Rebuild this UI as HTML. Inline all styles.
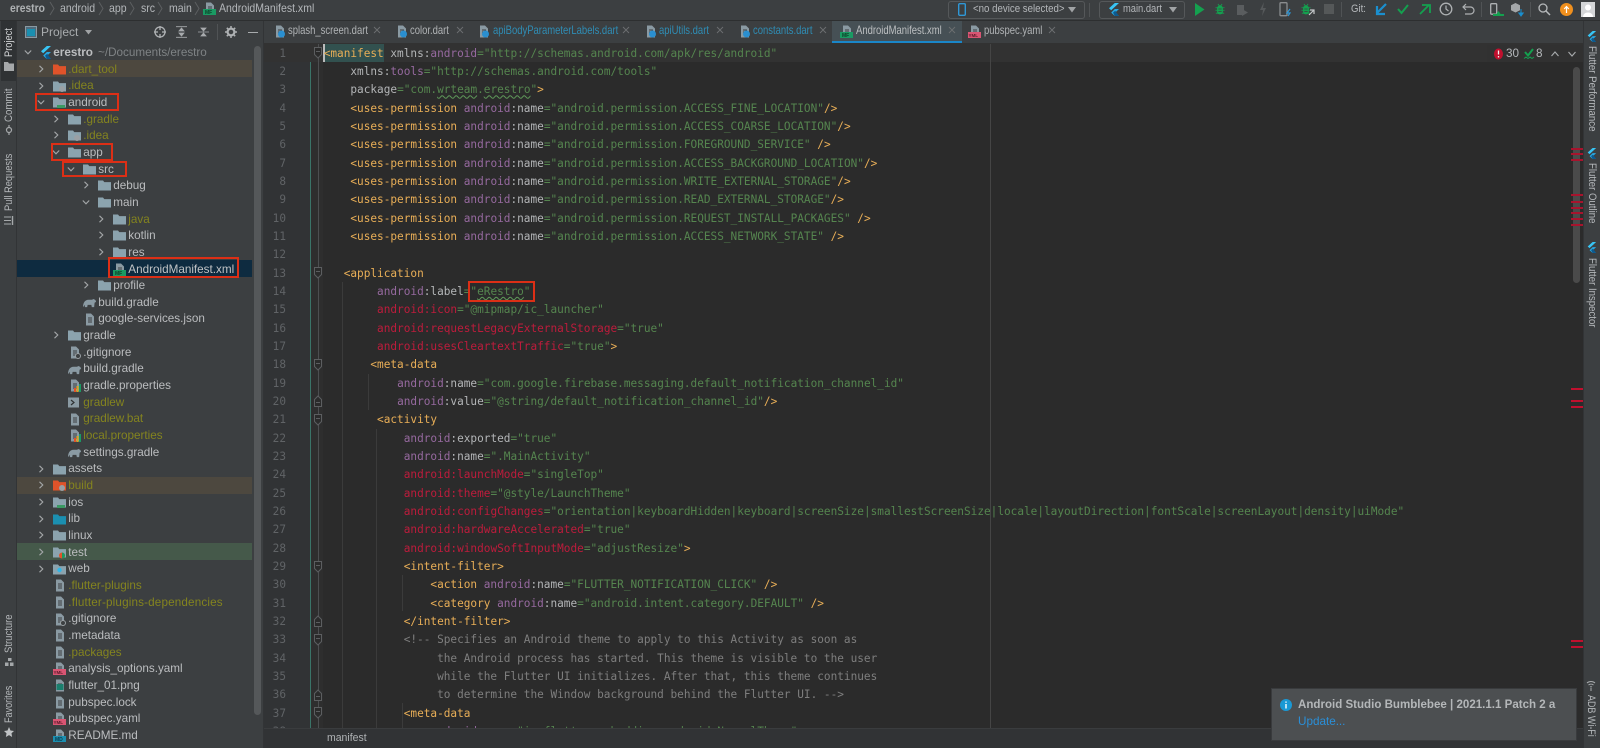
<!DOCTYPE html>
<html><head><meta charset="utf-8"><title>AndroidManifest.xml</title>
<style>
html,body{margin:0;padding:0;width:1600px;height:748px;overflow:hidden;background:#3c3f41}
#root{position:relative;width:1600px;height:748px;overflow:hidden;background:#3c3f41;font-family:"Liberation Sans",sans-serif;filter:blur(.3px)}
.p{position:absolute}
.ui{position:absolute;white-space:nowrap;color:#b4b7ba;font-size:11.7px;line-height:16px}
.sq{transform-origin:0 50%}
svg{position:absolute;overflow:visible}
svg text{font-family:"Liberation Sans",sans-serif;font-weight:bold}
#tree{position:absolute;left:17px;top:44.2px;width:235px;color:#bbbdbf;font-size:11.7px}
.r{position:relative;height:16.667px;line-height:16.667px;white-space:nowrap}
.r span{position:absolute;top:.8px}
.r svg{top:2px;width:13px;height:13px}
.r svg.ch{top:4px;width:8px;height:8px}
.o{color:#84841f}
#code{position:absolute;left:323.7px;top:44.7px;width:1245px;height:683.3px;overflow:hidden;font-family:"DejaVu Sans Mono","Liberation Mono",monospace;font-size:11.08px;line-height:18.333px;white-space:pre;color:#b3b5b7}
#nums{position:absolute;left:264px;top:44.7px;width:22px;height:683.3px;overflow:hidden;font-family:"DejaVu Sans Mono","Liberation Mono",monospace;font-size:11.08px;line-height:18.333px;text-align:right;color:#606366}
.t{color:#e8ae57}.a{color:#96699f}.s{color:#55854f}.e{color:#bd1c3c}.c{color:#7e7e7e}
.w{text-decoration:underline wavy #5f9a5a .6px;text-underline-offset:1px}
.box{position:absolute;border:2px solid #dc2f16;box-sizing:border-box}
.vl{position:absolute;white-space:nowrap;color:#b4b7ba;font-size:11.2px;line-height:14px;transform-origin:0 0}
.tab{position:absolute;top:23px;font-size:11.7px;line-height:16px;white-space:nowrap;color:#b0b3b5;transform:scaleX(.81);transform-origin:0 50%}
.bl{color:#2f8db5}
.x{position:absolute;top:25.5px;width:8px;height:8px}
.mk{position:absolute;left:1571px;width:12px;height:2px;background:#a8132d}
.g{position:absolute;width:1px;background:#3b3b3b}
</style></head><body>
<div id="root">
<svg width="0" height="0" style="position:absolute">
<defs>
<symbol id="folder" viewBox="0 0 13 13"><path d="M0 1.5h5l1.3 1.6H13v8.4H0z" fill="currentColor"/></symbol>
<symbol id="file" viewBox="0 0 13 13"><path d="M3 .5h5l3 3v9H3z" fill="#8a9aa3"/><path d="M5 5h4M5 7h4M5 9h4" stroke="#3c3f41" stroke-width=".9"/></symbol>
<symbol id="cr" viewBox="0 0 8 8"><path d="M2.5 .8 5.8 4 2.5 7.2" fill="none" stroke="#a4a7a9" stroke-width="1.1"/></symbol>
<symbol id="cd" viewBox="0 0 8 8"><path d="M.8 2.5 4 5.8 7.2 2.5" fill="none" stroke="#a4a7a9" stroke-width="1.1"/></symbol>
<symbol id="fl" viewBox="0 0 13 13"><path d="M7.8 0H12L4.2 7.3 2 5.3z" fill="#38c5f5"/><path d="M7.8 6H12L8.2 9.6 12 13H7.8L4.2 9.6z" fill="#29a9e3"/><path d="M6 9.6 8.2 7.8 12 13H7.8z" fill="#0d5a8f"/></symbol>
<symbol id="cl" viewBox="0 0 8 8"><path d="M1 1l6 6M7 1 1 7" stroke="#6c6f71" stroke-width=".9"/></symbol>
<symbol id="fo" viewBox="0 0 10 14"><path d="M1.500 1.500h7v7L5 12 1.500 8.500z" fill="#2b2b2b" stroke="#5c5e60"/><path d="M3 5.500h4" stroke="#5c5e60"/></symbol>
<symbol id="fc" viewBox="0 0 10 14"><path d="M1.500 12.500h7v-7L5 2 1.500 5.500z" fill="#2b2b2b" stroke="#5c5e60"/><path d="M3 8.500h4" stroke="#5c5e60"/></symbol>
<symbol id="ele" viewBox="0 0 14 11"><path d="M0 10.500C0 6 2 2.500 6 2.500c2 0 3.500.3 5-.7 1.500 0 3 1.200 3 3l-1.500 1-.5 4.700h-2.500L9 8H5l-.5 2.500H2L2 8z" fill="#8a9aa3"/></symbol>
<symbol id="bug" viewBox="0 0 12 14"><path d="M3.500 1l1.500 2h2L8.500 1" stroke="currentColor" fill="none"/><rect x="2.500" y="3" width="7" height="10.500" rx="3" fill="currentColor"/><path d="M.5 5.500h11M.5 8.500h11M1 12h10" stroke="currentColor"/><path d="M4 7h4M4 10h4" stroke="#3c3f41" stroke-width=".8"/></symbol>
</defs>
</svg>

<!-- top bar -->
<div class="p" style="left:0;top:20px;width:1600px;height:1px;background:#2d2f30"></div>
<div class="ui" style="left:10px;top:0;font-weight:bold;color:#aeb1b3;height:17px;line-height:17px;transform:scaleX(.88);transform-origin:0 50%">erestro</div>
<div class="ui" style="left:60px;top:0;line-height:17px;transform:scaleX(.9);transform-origin:0 50%">android</div>
<div class="ui" style="left:109px;top:0;line-height:17px;transform:scaleX(.9);transform-origin:0 50%">app</div>
<div class="ui" style="left:141px;top:0;line-height:17px;transform:scaleX(.9);transform-origin:0 50%">src</div>
<div class="ui" style="left:169px;top:0;line-height:17px;transform:scaleX(.9);transform-origin:0 50%">main</div>
<div class="ui" style="left:219px;top:0;line-height:17px;transform:scaleX(.9);transform-origin:0 50%">AndroidManifest.xml</div>
<svg style="left:0;top:0" width="210" height="20"><path d="M50 2l4 6.500-4 6.500M99 2l4 6.500-4 6.500M130 2l4 6.500-4 6.500M158 2l4 6.500-4 6.500M195 2l4 6.500-4 6.500" stroke="#5c5f61" fill="none"/></svg>
<svg style="left:203px;top:2px" width="13" height="13"><use href="#file" width="13" height="13"/><rect y="7" width="13" height="6" fill="#1a9a63"/><text x="2" y="12" font-size="5" fill="#0f3d28">MF</text></svg>

<div class="p" style="left:948px;top:1px;width:135px;height:16px;border:1px solid #55585a;border-radius:3px"></div>
<svg style="left:958px;top:3px" width="8" height="13"><rect x=".7" y=".7" width="6.600" height="11.600" rx="1" fill="none" stroke="#2f97d6" stroke-width="1.400"/></svg>
<div class="ui" style="left:973px;top:1px;font-size:11.4px;transform:scaleX(.85);transform-origin:0 50%">&lt;no device selected&gt;</div>
<svg style="left:1068px;top:7px" width="8" height="6"><path d="M0 0h8L4 5.500z" fill="#a0a3a5"/></svg>
<div class="p" style="left:1089px;top:3px;width:1px;height:14px;background:#505355"></div>
<div class="p" style="left:1099px;top:1px;width:84px;height:16px;border:1px solid #55585a;border-radius:3px"></div>
<svg style="left:1107px;top:3px" width="13" height="13"><use href="#fl" width="13" height="13"/></svg>
<div class="ui" style="left:1123px;top:1px;font-size:11.4px;transform:scaleX(.82);transform-origin:0 50%">main.dart</div>
<svg style="left:1169px;top:7px" width="8" height="6"><path d="M0 0h8L4 5.500z" fill="#a0a3a5"/></svg>
<svg style="left:1195px;top:3px" width="10" height="13"><path d="M0 0l9.500 6.500L0 13z" fill="#14a04f"/></svg>
<svg style="left:1215px;top:3px;color:#14a04f" width="10" height="12"><use href="#bug" width="10" height="12"/></svg>
<svg style="left:1236px;top:3px" width="13" height="13"><path d="M1 2h7v10H1z" fill="#5a5d5f"/><path d="M6 6l6 3.500-6 3.500z" fill="#5a5d5f"/></svg>
<svg style="left:1259px;top:2px" width="8" height="14"><path d="M5 0 1 8h3l-1 6 4-8H4z" fill="#55585a"/></svg>
<svg style="left:1279px;top:2px" width="13" height="15"><rect x="1" y=".7" width="7" height="13" rx="1" fill="none" stroke="#8a8d8f" stroke-width="1.300"/><path d="M11 7 8 11h3l-2 3" stroke="#2f97d6" fill="none" stroke-width="1.200"/></svg>
<svg style="left:1301px;top:3px;color:#14a04f" width="10" height="12"><use href="#bug" width="10" height="12"/></svg>
<svg style="left:1308px;top:9px" width="7" height="7"><path d="M6 1 1 6M2 1h4v4" stroke="#c4c7c9" fill="none" stroke-width="1.200"/></svg>
<div class="p" style="left:1324px;top:4px;width:10px;height:10px;background:#555859"></div>
<div class="p" style="left:1341px;top:2px;width:1px;height:15px;background:#505355"></div>
<div class="ui" style="left:1351px;top:1px;font-size:11.4px;transform:scaleX(.84);transform-origin:0 50%">Git:</div>
<svg style="left:1375px;top:3px" width="12" height="12"><path d="M11 1 2 10M2 3v8h8" stroke="#1a8fcf" fill="none" stroke-width="2.200"/></svg>
<svg style="left:1397px;top:3px" width="12" height="12"><path d="M1 6l3.500 4L11 2" stroke="#14a04f" fill="none" stroke-width="2"/></svg>
<svg style="left:1419px;top:3px" width="12" height="12"><path d="M1 11l9-9M3 2h8v8" stroke="#14a04f" fill="none" stroke-width="1.800"/></svg>
<svg style="left:1439px;top:2px" width="14" height="14"><circle cx="7" cy="7" r="5.800" fill="none" stroke="#aeb1b3" stroke-width="1.300"/><path d="M7 3.500V7l2.500 2" stroke="#aeb1b3" fill="none" stroke-width="1.200"/></svg>
<svg style="left:1462px;top:3px" width="13" height="12"><path d="M4 1 1 4l3 3M1 4h7.500a3.500 3.500 0 0 1 0 7H3" stroke="#aeb1b3" fill="none" stroke-width="1.200"/></svg>
<div class="p" style="left:1481px;top:2px;width:1px;height:15px;background:#505355"></div>
<svg style="left:1490px;top:3px" width="14" height="13"><rect x=".7" y=".7" width="6" height="10.500" rx="1" fill="none" stroke="#aeb1b3" stroke-width="1.300"/><path d="M5 13l3.500-5 3.500 5z" fill="#14a04f"/><rect x="3" y="11" width="11" height="2" fill="#14a04f"/></svg>
<svg style="left:1511px;top:3px" width="13" height="14"><path d="M4.500 0 9 2.200v5L4.500 9.500 0 7.200v-5z" fill="#a4a7a9"/><path d="M10 6v6M7.800 10 10 13l2.200-3z" stroke="#1a8fcf" fill="#1a8fcf"/></svg>
<div class="p" style="left:1530px;top:2px;width:1px;height:15px;background:#505355"></div>
<svg style="left:1538px;top:3px" width="13" height="13"><circle cx="5" cy="5" r="4" fill="none" stroke="#b6b9bb" stroke-width="1.300"/><path d="M8 8l4 4" stroke="#b6b9bb" stroke-width="1.500"/></svg>
<svg style="left:1559.500px;top:2.500px" width="13" height="13"><circle cx="6.500" cy="6.500" r="6.500" fill="#f0901e"/><path d="M6.500 10V4M4.200 6 6.500 3.500 8.800 6" stroke="#fff" fill="none" stroke-width="1.200"/></svg>
<svg style="left:1581px;top:2px" width="14" height="15"><rect width="14" height="15" fill="#d4d6d8"/><circle cx="7" cy="5.500" r="3" fill="#fff"/><path d="M2 15c0-6 10-6 10 0z" fill="#fff"/></svg>

<!-- left rail -->
<div class="p" style="left:0;top:21px;width:17px;height:727px;background:#3c3f41;border-right:1px solid #323436;box-sizing:border-box"></div>
<div class="p" style="left:1px;top:21px;width:15px;height:60px;background:#2f3234"></div>
<div class="vl" style="left:1.500px;top:57px;transform:rotate(-90deg) scaleX(.83);color:#d0d2d4">Project</div>
<svg style="left:4px;top:61px" width="10" height="10"><path d="M0 1h4l1 1.500h5V10H0z" fill="#a5a8aa"/></svg>
<div class="vl" style="left:1.500px;top:122px;transform:rotate(-90deg) scaleX(.87)">Commit</div>
<svg style="left:4px;top:125px" width="10" height="10"><circle cx="5" cy="5" r="2.500" fill="none" stroke="#a5a8aa" stroke-width="1.200"/><path d="M5 0v2.500M5 7.500V10" stroke="#a5a8aa" stroke-width="1.200"/></svg>
<div class="vl" style="left:1.500px;top:211px;transform:rotate(-90deg) scaleX(.83)">Pull Requests</div>
<svg style="left:4px;top:216px" width="10" height="9"><path d="M0 1h7M0 4.500h7M0 8h7" stroke="#a5a8aa"/><path d="M8.500 0v9" stroke="#a5a8aa" stroke-width="1.400"/></svg>
<div class="vl" style="left:1.500px;top:653px;transform:rotate(-90deg) scaleX(.85)">Structure</div>
<svg style="left:5px;top:658px" width="9" height="8"><rect x="3" y="0" width="3.500" height="3" fill="#a5a8aa"/><rect y="4.500" width="3.500" height="3.500" fill="#a5a8aa"/><rect x="5" y="4.500" width="3.500" height="3.500" fill="#a5a8aa"/></svg>
<div class="vl" style="left:1.500px;top:723px;transform:rotate(-90deg) scaleX(.81)">Favorites</div>
<svg style="left:4px;top:727px" width="10" height="10"><path d="M5 0l1.500 3.500L10 4 7.500 6.300 8.100 10 5 8.100 1.900 10l.6-3.700L0 4l3.500-.5z" fill="#c0c3c5"/></svg>

<!-- project header -->
<svg style="left:25px;top:26px" width="12" height="12"><rect x=".5" y=".5" width="11" height="11" fill="#4f6b7c" stroke="#8a9aa3"/><rect x="2" y="3" width="8" height="7" fill="#1a8fb0"/></svg>
<div class="ui" style="left:41px;top:24px;font-size:12px;color:#a9acae">Project</div>
<svg style="left:85px;top:30px" width="7" height="5"><path d="M0 0h7L3.500 4.500z" fill="#a0a3a5"/></svg>
<svg style="left:154px;top:26px" width="12" height="12"><circle cx="6" cy="6" r="5" fill="none" stroke="#b0b3b5" stroke-width="1.300"/><path d="M6 0v4M6 8v4M0 6h4M8 6h4" stroke="#b0b3b5" stroke-width="1.300"/></svg>
<svg style="left:176px;top:26px" width="11" height="12"><path d="M0 .7h11M0 11.300h11M5.500 2 8 5H3zM5.500 10 8 7H3z" stroke="#a8abad" fill="#a8abad" stroke-width=".8"/></svg>
<svg style="left:198px;top:26px" width="11" height="12"><path d="M0 6h11M5.500 5 8 2H3zM5.500 7 8 10H3z" stroke="#a8abad" fill="#a8abad" stroke-width=".8"/></svg>
<div class="p" style="left:217px;top:24px;width:1px;height:16px;background:#505355"></div>
<svg style="left:225px;top:26px" width="12" height="12"><circle cx="6" cy="6" r="3.400" fill="none" stroke="#aeb1b3" stroke-width="2.200"/><path d="M6 0v2M6 10v2M0 6h2M10 6h2M1.800 1.800l1.400 1.400M8.800 8.800l1.400 1.400M10.200 1.800 8.800 3.200M3.200 8.800l-1.400 1.400" stroke="#aeb1b3" stroke-width="1.500"/></svg>
<div class="p" style="left:248px;top:31.500px;width:10px;height:1.300px;background:#a8abad"></div>

<!-- tree highlights -->
<div class="p" style="left:17px;top:60.300px;width:235px;height:17px;background:#4d483f"></div>
<div class="p" style="left:17px;top:260.300px;width:235px;height:17px;background:#0e2b40"></div>
<div class="p" style="left:17px;top:477px;width:235px;height:17px;background:#4d483f"></div>
<div class="p" style="left:17px;top:543.400px;width:235px;height:17px;background:#45594a"></div>
<div class="p" style="left:254px;top:46px;width:7px;height:669px;border-radius:4px;background:#55585a"></div>

<!-- tree -->
<div id="tree">
<div class="r"><svg class="ch" style="left:7px"><use href="#cd" width="8" height="8"/></svg><svg style="left:22px"><use href="#fl" width="13" height="13"/></svg><span style="left:36.300px;font-weight:bold">erestro</span><span style="left:81px;color:#7f8385">~/Documents/erestro</span></div>
<div class="r"><svg class="ch" style="left:20px"><use href="#cr" width="8" height="8"/></svg><svg style="left:36px;color:#e0532a"><use href="#folder" width="13" height="13"/></svg><span class="o" style="left:51.300px">.dart_tool</span></div>
<div class="r"><svg class="ch" style="left:20px"><use href="#cr" width="8" height="8"/></svg><svg style="left:36px;color:#8ba3ae"><use href="#folder" width="13" height="13"/><circle cx="9" cy="9" r="3" fill="#9aa0a4"/></svg><span class="o" style="left:51.300px">.idea</span></div>
<div class="r"><svg class="ch" style="left:20px"><use href="#cd" width="8" height="8"/></svg><svg style="left:36px;color:#8ba3ae"><use href="#folder" width="13" height="13"/><rect x="4" y="9" width="8" height="3" fill="#3a9a63"/></svg><span style="left:51.300px">android</span></div>
<div class="r"><svg class="ch" style="left:35px"><use href="#cr" width="8" height="8"/></svg><svg style="left:51px;color:#8ba3ae"><use href="#folder" width="13" height="13"/></svg><span class="o" style="left:66.300px">.gradle</span></div>
<div class="r"><svg class="ch" style="left:35px"><use href="#cr" width="8" height="8"/></svg><svg style="left:51px;color:#8ba3ae"><use href="#folder" width="13" height="13"/><circle cx="9" cy="9" r="3" fill="#9aa0a4"/></svg><span class="o" style="left:66.300px">.idea</span></div>
<div class="r"><svg class="ch" style="left:35px"><use href="#cd" width="8" height="8"/></svg><svg style="left:51px;color:#8ba3ae"><use href="#folder" width="13" height="13"/></svg><span style="left:66.300px">app</span></div>
<div class="r"><svg class="ch" style="left:50px"><use href="#cd" width="8" height="8"/></svg><svg style="left:66px;color:#8ba3ae"><use href="#folder" width="13" height="13"/></svg><span style="left:81.300px">src</span></div>
<div class="r"><svg class="ch" style="left:65px"><use href="#cr" width="8" height="8"/></svg><svg style="left:81px;color:#8ba3ae"><use href="#folder" width="13" height="13"/></svg><span style="left:96.300px">debug</span></div>
<div class="r"><svg class="ch" style="left:65px"><use href="#cd" width="8" height="8"/></svg><svg style="left:81px;color:#8ba3ae"><use href="#folder" width="13" height="13"/></svg><span style="left:96.300px">main</span></div>
<div class="r"><svg class="ch" style="left:80px"><use href="#cr" width="8" height="8"/></svg><svg style="left:96px;color:#8ba3ae"><use href="#folder" width="13" height="13"/></svg><span class="o" style="left:111.300px">java</span></div>
<div class="r"><svg class="ch" style="left:80px"><use href="#cr" width="8" height="8"/></svg><svg style="left:96px;color:#8ba3ae"><use href="#folder" width="13" height="13"/></svg><span style="left:111.300px">kotlin</span></div>
<div class="r"><svg class="ch" style="left:80px"><use href="#cr" width="8" height="8"/></svg><svg style="left:96px;color:#8ba3ae"><use href="#folder" width="13" height="13"/></svg><span style="left:111.300px">res</span></div>
<div class="r"><svg style="left:96px"><use href="#file" width="13" height="13"/><rect y="7" width="13" height="6" fill="#1a9a63"/><text x="2" y="12" font-size="5" fill="#0f3d28">MF</text></svg><span style="left:111.300px;color:#c0c3c5">AndroidManifest.xml</span></div>
<div class="r"><svg class="ch" style="left:65px"><use href="#cr" width="8" height="8"/></svg><svg style="left:81px;color:#8ba3ae"><use href="#folder" width="13" height="13"/></svg><span style="left:96.300px">profile</span></div>
<div class="r"><svg style="left:66px"><use href="#ele" width="13" height="13"/></svg><span style="left:81.300px">build.gradle</span></div>
<div class="r"><svg style="left:66px"><use href="#file" width="13" height="13"/></svg><span style="left:81.300px">google-services.json</span></div>
<div class="r"><svg class="ch" style="left:35px"><use href="#cr" width="8" height="8"/></svg><svg style="left:51px;color:#8ba3ae"><use href="#folder" width="13" height="13"/></svg><span style="left:66.300px">gradle</span></div>
<div class="r"><svg style="left:51px"><use href="#file" width="13" height="13"/><circle cx="10" cy="10" r="2.500" fill="#3c3f41" stroke="#9aa0a4"/></svg><span style="left:66.300px">.gitignore</span></div>
<div class="r"><svg style="left:51px"><use href="#ele" width="13" height="13"/></svg><span style="left:66.300px">build.gradle</span></div>
<div class="r"><svg style="left:51px"><use href="#file" width="13" height="13"/><path d="M6 13V9h2v4z" fill="#e0532a"/><path d="M8.500 13V7h2v6z" fill="#d9a520"/><path d="M11 13V5h2v8z" fill="#1a9a63"/></svg><span style="left:66.300px">gradle.properties</span></div>
<div class="r"><svg style="left:51px"><rect y="1.500" width="11" height="10" fill="#8a9aa3"/><path d="M3 4l3 2.500L3 9" stroke="#2f3234" fill="none" stroke-width="1.200"/></svg><span class="o" style="left:66.300px">gradlew</span></div>
<div class="r"><svg style="left:51px"><use href="#file" width="13" height="13"/></svg><span class="o" style="left:66.300px">gradlew.bat</span></div>
<div class="r"><svg style="left:51px"><use href="#file" width="13" height="13"/><path d="M6 13V9h2v4z" fill="#e0532a"/><path d="M8.500 13V7h2v6z" fill="#d9a520"/><path d="M11 13V5h2v8z" fill="#1a9a63"/></svg><span class="o" style="left:66.300px">local.properties</span></div>
<div class="r"><svg style="left:51px"><use href="#ele" width="13" height="13"/></svg><span style="left:66.300px">settings.gradle</span></div>
<div class="r"><svg class="ch" style="left:20px"><use href="#cr" width="8" height="8"/></svg><svg style="left:36px;color:#8ba3ae"><use href="#folder" width="13" height="13"/></svg><span style="left:51.300px">assets</span></div>
<div class="r"><svg class="ch" style="left:20px"><use href="#cr" width="8" height="8"/></svg><svg style="left:36px;color:#e0532a"><use href="#folder" width="13" height="13"/><circle cx="9" cy="9" r="3" fill="#9aa0a4"/></svg><span class="o" style="left:51.300px">build</span></div>
<div class="r"><svg class="ch" style="left:20px"><use href="#cr" width="8" height="8"/></svg><svg style="left:36px;color:#8ba3ae"><use href="#folder" width="13" height="13"/><rect x="4" y="9" width="8" height="3" fill="#3a9a63"/></svg><span style="left:51.300px">ios</span></div>
<div class="r"><svg class="ch" style="left:20px"><use href="#cr" width="8" height="8"/></svg><svg style="left:36px;color:#1b8fb0"><use href="#folder" width="13" height="13"/></svg><span style="left:51.300px">lib</span></div>
<div class="r"><svg class="ch" style="left:20px"><use href="#cr" width="8" height="8"/></svg><svg style="left:36px;color:#8ba3ae"><use href="#folder" width="13" height="13"/></svg><span style="left:51.300px">linux</span></div>
<div class="r"><svg class="ch" style="left:20px"><use href="#cr" width="8" height="8"/></svg><svg style="left:36px;color:#8ba3ae"><use href="#folder" width="13" height="13"/><circle cx="9" cy="9.500" r="3" fill="#e0532a"/><path d="M9 6.500a3 3 0 0 1 0 6z" fill="#1a9a63"/></svg><span style="left:51.300px">test</span></div>
<div class="r"><svg class="ch" style="left:20px"><use href="#cr" width="8" height="8"/></svg><svg style="left:36px;color:#8ba3ae"><use href="#folder" width="13" height="13"/><circle cx="6.500" cy="7" r="2.200" fill="#2fb6e8"/></svg><span style="left:51.300px">web</span></div>
<div class="r"><svg style="left:36px"><use href="#file" width="13" height="13"/></svg><span class="o" style="left:51.300px">.flutter-plugins</span></div>
<div class="r"><svg style="left:36px"><use href="#file" width="13" height="13"/></svg><span class="o" style="left:51.300px;letter-spacing:.15px">.flutter-plugins-dependencies</span></div>
<div class="r"><svg style="left:36px"><use href="#file" width="13" height="13"/><circle cx="10" cy="10" r="2.500" fill="#3c3f41" stroke="#9aa0a4"/></svg><span style="left:51.300px">.gitignore</span></div>
<div class="r"><svg style="left:36px"><use href="#file" width="13" height="13"/></svg><span style="left:51.300px">.metadata</span></div>
<div class="r"><svg style="left:36px"><use href="#file" width="13" height="13"/></svg><span class="o" style="left:51.300px">.packages</span></div>
<div class="r"><svg style="left:36px"><use href="#file" width="13" height="13"/><rect y="7" width="13" height="6" fill="#d95573"/><text x=".5" y="12" font-size="4.500" fill="#5a1a2a">YML</text></svg><span style="left:51.300px">analysis_options.yaml</span></div>
<div class="r"><svg style="left:36px"><use href="#file" width="13" height="13"/><rect x="3.500" y="5" width="7" height="6" fill="#1a7f6d"/></svg><span style="left:51.300px">flutter_01.png</span></div>
<div class="r"><svg style="left:36px"><use href="#file" width="13" height="13"/></svg><span style="left:51.300px">pubspec.lock</span></div>
<div class="r"><svg style="left:36px"><use href="#file" width="13" height="13"/><rect y="7" width="13" height="6" fill="#d95573"/><text x=".5" y="12" font-size="4.500" fill="#5a1a2a">YML</text></svg><span style="left:51.300px">pubspec.yaml</span></div>
<div class="r"><svg style="left:36px"><use href="#file" width="13" height="13"/><rect y="7" width="13" height="6" fill="#1b8fb0"/><text x="2" y="12" font-size="5" fill="#0c3a4a">MD</text></svg><span style="left:51.300px">README.md</span></div>
</div>

<!-- tabs -->
<div class="p" style="left:263px;top:21px;width:1px;height:727px;background:#323436"></div>
<div class="p" style="left:832px;top:21px;width:130px;height:22px;background:#465055"></div>
<div class="p" style="left:832px;top:41px;width:130px;height:2.500px;background:#1a86c8"></div>
<div class="p" style="left:264px;top:43px;width:1319px;height:1px;background:#323232"></div>

<svg style="left:273px;top:25px" width="13" height="13"><use href="#file" width="13" height="13"/><circle cx="8.500" cy="9" r="3.500" fill="#2a8fd0"/></svg>
<div class="tab" style="left:288px">splash_screen.dart</div><svg class="x" style="left:373px"><use href="#cl" width="8" height="8"/></svg>
<svg style="left:395px;top:25px" width="13" height="13"><use href="#file" width="13" height="13"/><circle cx="8.500" cy="9" r="3.500" fill="#2a8fd0"/></svg>
<div class="tab" style="left:410px">color.dart</div><svg class="x" style="left:456px"><use href="#cl" width="8" height="8"/></svg>
<svg style="left:477px;top:25px" width="13" height="13"><use href="#file" width="13" height="13"/><circle cx="8.500" cy="9" r="3.500" fill="#2a8fd0"/></svg>
<div class="tab bl" style="left:492.700px">apiBodyParameterLabels.dart</div><svg class="x" style="left:622px"><use href="#cl" width="8" height="8"/></svg>
<svg style="left:644px;top:25px" width="13" height="13"><use href="#file" width="13" height="13"/><circle cx="8.500" cy="9" r="3.500" fill="#2a8fd0"/></svg>
<div class="tab bl" style="left:659px">apiUtils.dart</div><svg class="x" style="left:716px"><use href="#cl" width="8" height="8"/></svg>
<svg style="left:738px;top:25px" width="13" height="13"><use href="#file" width="13" height="13"/><circle cx="8.500" cy="9" r="3.500" fill="#2a8fd0"/></svg>
<div class="tab bl" style="left:753px">constants.dart</div><svg class="x" style="left:819px"><use href="#cl" width="8" height="8"/></svg>
<svg style="left:840px;top:25px" width="13" height="13"><use href="#file" width="13" height="13"/><rect y="7" width="13" height="6" fill="#1a9a63"/><text x="2" y="12" font-size="5" fill="#0f3d28">MF</text></svg>
<div class="tab" style="left:856px;color:#bcbfc1">AndroidManifest.xml</div><svg class="x" style="left:948px"><use href="#cl" width="8" height="8"/></svg>
<svg style="left:968px;top:25px" width="13" height="13"><use href="#file" width="13" height="13"/><rect y="7" width="13" height="6" fill="#d95573"/><text x=".5" y="12" font-size="4.500" fill="#5a1a2a">YML</text></svg>
<div class="tab" style="left:984px">pubspec.yaml</div><svg class="x" style="left:1048px"><use href="#cl" width="8" height="8"/></svg>

<!-- editor -->
<div class="p" style="left:264px;top:44px;width:46px;height:684px;background:#313335"></div>
<div class="p" style="left:310px;top:44px;width:1px;height:684px;background:#3a7468"></div>
<div class="p" style="left:311px;top:44px;width:1272px;height:684px;background:#2b2b2b"></div>
<div class="p" style="left:264px;top:44px;width:1319px;height:18px;background:#323232"></div>
<div class="p" style="left:311px;top:62px;width:12px;height:666px;background:#2e2e2e"></div>
<div class="p" style="left:318px;top:44px;width:1px;height:684px;background:#4c4e50"></div>
<div class="p" style="left:990px;top:44px;width:1px;height:684px;background:#454545"></div>
<div class="p" style="left:323.700px;top:44px;width:60px;height:18px;background:#32514f"></div>
<div class="p" style="left:323px;top:44px;width:1.500px;height:18px;background:#bbbbbb"></div>
<div class="g" style="left:342px;top:282px;height:446px"></div>
<div class="g" style="left:368px;top:374px;height:36px"></div>
<div class="g" style="left:376px;top:429px;height:299px"></div>
<div class="g" style="left:402px;top:575px;height:36px"></div>
<div class="g" style="left:402px;top:703px;height:25px"></div>

<svg style="left:313px;top:46px" width="10" height="14"><use href="#fo" width="10" height="14"/></svg>
<svg style="left:313px;top:266px" width="10" height="14"><use href="#fo" width="10" height="14"/></svg>
<svg style="left:313px;top:358px" width="10" height="14"><use href="#fo" width="10" height="14"/></svg>
<svg style="left:313px;top:394px" width="10" height="14"><use href="#fc" width="10" height="14"/></svg>
<svg style="left:313px;top:413px" width="10" height="14"><use href="#fo" width="10" height="14"/></svg>
<svg style="left:313px;top:560px" width="10" height="14"><use href="#fo" width="10" height="14"/></svg>
<svg style="left:313px;top:614px" width="10" height="14"><use href="#fc" width="10" height="14"/></svg>
<svg style="left:313px;top:633px" width="10" height="14"><use href="#fo" width="10" height="14"/></svg>
<svg style="left:313px;top:688px" width="10" height="14"><use href="#fc" width="10" height="14"/></svg>
<svg style="left:313px;top:706px" width="10" height="14"><use href="#fo" width="10" height="14"/></svg>

<div id="nums">1<br>2<br>3<br>4<br>5<br>6<br>7<br>8<br>9<br>10<br>11<br>12<br>13<br>14<br>15<br>16<br>17<br>18<br>19<br>20<br>21<br>22<br>23<br>24<br>25<br>26<br>27<br>28<br>29<br>30<br>31<br>32<br>33<br>34<br>35<br>36<br>37<br>38</div>

<div id="code"><span class="t">&lt;manifest</span> xmlns:<span class="a">android</span><span class="s">="http://schemas.android.com/apk/res/android"</span>
    xmlns:<span class="a">tools</span><span class="s">="http://schemas.android.com/tools"</span>
    package<span class="s">="com.<span class="w">wrteam</span>.<span class="w">erestro</span>"</span><span class="t">&gt;</span>
    <span class="t">&lt;uses-permission</span> <span class="a">android</span>:name<span class="s">="android.permission.ACCESS_FINE_LOCATION"</span><span class="t">/&gt;</span>
    <span class="t">&lt;uses-permission</span> <span class="a">android</span>:name<span class="s">="android.permission.ACCESS_COARSE_LOCATION"</span><span class="t">/&gt;</span>
    <span class="t">&lt;uses-permission</span> <span class="a">android</span>:name<span class="s">="android.permission.FOREGROUND_SERVICE"</span> <span class="t">/&gt;</span>
    <span class="t">&lt;uses-permission</span> <span class="a">android</span>:name<span class="s">="android.permission.ACCESS_BACKGROUND_LOCATION"</span><span class="t">/&gt;</span>
    <span class="t">&lt;uses-permission</span> <span class="a">android</span>:name<span class="s">="android.permission.WRITE_EXTERNAL_STORAGE"</span><span class="t">/&gt;</span>
    <span class="t">&lt;uses-permission</span> <span class="a">android</span>:name<span class="s">="android.permission.READ_EXTERNAL_STORAGE"</span><span class="t">/&gt;</span>
    <span class="t">&lt;uses-permission</span> <span class="a">android</span>:name<span class="s">="android.permission.REQUEST_INSTALL_PACKAGES"</span> <span class="t">/&gt;</span>
    <span class="t">&lt;uses-permission</span> <span class="a">android</span>:name<span class="s">="android.permission.ACCESS_NETWORK_STATE"</span> <span class="t">/&gt;</span>

   <span class="t">&lt;application</span>
        <span class="a">android</span>:label<span class="s">="<span class="w">eRestro</span>"</span>
        <span class="e">android:icon</span><span class="s">="@mipmap/ic_launcher"</span>
        <span class="e">android:requestLegacyExternalStorage</span><span class="s">="true"</span>
        <span class="e">android:usesCleartextTraffic</span><span class="s">="true"</span><span class="t">&gt;</span>
       <span class="t">&lt;meta-data</span>
           <span class="a">android</span>:name<span class="s">="com.google.firebase.messaging.default_notification_channel_id"</span>
           <span class="a">android</span>:value<span class="s">="@string/default_notification_channel_id"</span><span class="t">/&gt;</span>
        <span class="t">&lt;activity</span>
            <span class="a">android</span>:exported<span class="s">="true"</span>
            <span class="a">android</span>:name<span class="s">=".MainActivity"</span>
            <span class="e">android:launchMode</span><span class="s">="singleTop"</span>
            <span class="e">android:theme</span><span class="s">="@style/LaunchTheme"</span>
            <span class="e">android:configChanges</span><span class="s">="orientation|keyboardHidden|keyboard|screenSize|smallestScreenSize|locale|layoutDirection|fontScale|screenLayout|density|uiMode"</span>
            <span class="e">android:hardwareAccelerated</span><span class="s">="true"</span>
            <span class="e">android:windowSoftInputMode</span><span class="s">="adjustResize"</span><span class="t">&gt;</span>
            <span class="t">&lt;intent-filter&gt;</span>
                <span class="t">&lt;action</span> <span class="a">android</span>:name<span class="s">="FLUTTER_NOTIFICATION_CLICK"</span> <span class="t">/&gt;</span>
                <span class="t">&lt;category</span> <span class="a">android</span>:name<span class="s">="android.intent.category.DEFAULT"</span> <span class="t">/&gt;</span>
            <span class="t">&lt;/intent-filter&gt;</span>
<span class="c">            &lt;!-- Specifies an Android theme to apply to this Activity as soon as
                 the Android process has started. This theme is visible to the user
                 while the Flutter UI initializes. After that, this theme continues
                 to determine the Window background behind the Flutter UI. --&gt;</span>
            <span class="t">&lt;meta-data</span>
                <span class="a">android</span>:name<span class="s">="io.flutter.embedding.android.NormalTheme"</span></div>

<!-- inspection widget -->
<div class="p" style="left:1487px;top:45px;width:96px;height:17px;background:#313131"></div>
<svg style="left:1492.500px;top:48px" width="11" height="12"><ellipse cx="5.500" cy="6" rx="4.500" ry="5.500" fill="#c0102e"/><path d="M5.500 2.500v4M5.500 8v1.500" stroke="#f2f2f2" stroke-width="1.300"/></svg>
<div class="ui" style="left:1506px;top:46px;font-size:11.7px">30</div>
<svg style="left:1524px;top:48px" width="10" height="13"><path d="M1 4l3 3.500L9 1" stroke="#14a04f" fill="none" stroke-width="2"/><path d="M0 10.500l2-1.500 2 1.500 2-1.500 2 1.500 2-1.500" stroke="#14a04f" fill="none"/></svg>
<div class="ui" style="left:1536px;top:46px;font-size:11.7px">8</div>
<svg style="left:1551px;top:51px" width="8" height="6"><path d="M.5 5 4 1l3.500 4" stroke="#a8abad" fill="none" stroke-width="1.100"/></svg>
<svg style="left:1568px;top:51px" width="8" height="6"><path d="M.5 1 4 5l3.500-4" stroke="#a8abad" fill="none" stroke-width="1.100"/></svg>

<!-- scrollbar & marks -->
<div class="p" style="left:1573px;top:67px;width:7px;height:216px;border-radius:4px;background:#4a4a4a"></div>
<div class="mk" style="top:147.500px"></div><div class="mk" style="top:153px"></div><div class="mk" style="top:158.500px"></div>
<div class="mk" style="top:193.500px"></div><div class="mk" style="top:200.500px"></div><div class="mk" style="top:206.500px"></div><div class="mk" style="top:212px"></div><div class="mk" style="top:218px"></div><div class="mk" style="top:224px"></div>
<div class="mk" style="top:388px;background:#c0102e"></div><div class="mk" style="top:399.500px;background:#c0102e"></div><div class="mk" style="top:405.500px;background:#c0102e"></div>
<div class="mk" style="top:639.500px;background:#c0102e"></div><div class="mk" style="top:645.500px;background:#c0102e"></div>

<!-- bottom bar -->
<div class="p" style="left:264px;top:728px;width:1319px;height:20px;background:#313335;border-top:1px solid #3a3c3e;box-sizing:border-box"></div>
<div class="ui" style="left:326.500px;top:730px;font-size:11.4px;color:#b0b3b5;transform:scaleX(.92);transform-origin:0 50%">manifest</div>

<!-- right rail -->
<div class="p" style="left:1583px;top:21px;width:17px;height:727px;background:#3c3f41;border-left:1px solid #323436;box-sizing:border-box"></div>
<svg style="left:1586px;top:31px" width="11" height="11"><use href="#fl" width="11" height="11"/></svg>
<div class="vl" style="left:1599px;top:46px;transform:rotate(90deg) scaleX(.865)">Flutter Performance</div>
<svg style="left:1586px;top:148px" width="11" height="11"><use href="#fl" width="11" height="11"/></svg>
<div class="vl" style="left:1599px;top:163px;transform:rotate(90deg) scaleX(.86)">Flutter Outline</div>
<svg style="left:1586px;top:242px" width="11" height="11"><use href="#fl" width="11" height="11"/></svg>
<div class="vl" style="left:1599px;top:258px;transform:rotate(90deg) scaleX(.86)">Flutter Inspector</div>
<svg style="left:1586px;top:681px" width="10" height="10"><path d="M1 2a6 6 0 0 1 8 0M2.500 4a4 4 0 0 1 5 0M4 6a2 2 0 0 1 2 0" fill="none" stroke="#a8abad"/><path d="M5 7v3" stroke="#a8abad"/></svg>
<div class="vl" style="left:1598px;top:695px;transform:rotate(90deg) scaleX(.8)">ADB Wi-Fi</div>

<!-- notification -->
<div class="p" style="left:1271px;top:688px;width:306px;height:53px;background:#4c4f51;border:1px solid #393b3d;box-sizing:border-box"></div>
<svg style="left:1280px;top:699px" width="12" height="12"><circle cx="6" cy="6" r="6" fill="#1a99d5"/><path d="M6 5v4.500M6 2.500v1.300" stroke="#fff" stroke-width="1.400"/></svg>
<div class="ui" style="left:1298px;top:697px;font-weight:bold;font-size:11.55px;color:#b4b7b9">Android Studio Bumblebee | 2021.1.1 Patch 2 a</div>
<div class="ui" style="left:1298px;top:714px;font-size:11.7px;color:#2a8fd8">Update...</div>

<!-- annotation boxes -->
<div class="box" style="left:34.500px;top:92.500px;width:84px;height:18px"></div>
<div class="box" style="left:51px;top:142.500px;width:62px;height:18px"></div>
<div class="box" style="left:62px;top:161px;width:65px;height:16px"></div>
<div class="box" style="left:108px;top:257px;width:131px;height:21px"></div>
<div class="box" style="left:467.500px;top:280.500px;width:67px;height:21px"></div>
</div>
</body></html>
